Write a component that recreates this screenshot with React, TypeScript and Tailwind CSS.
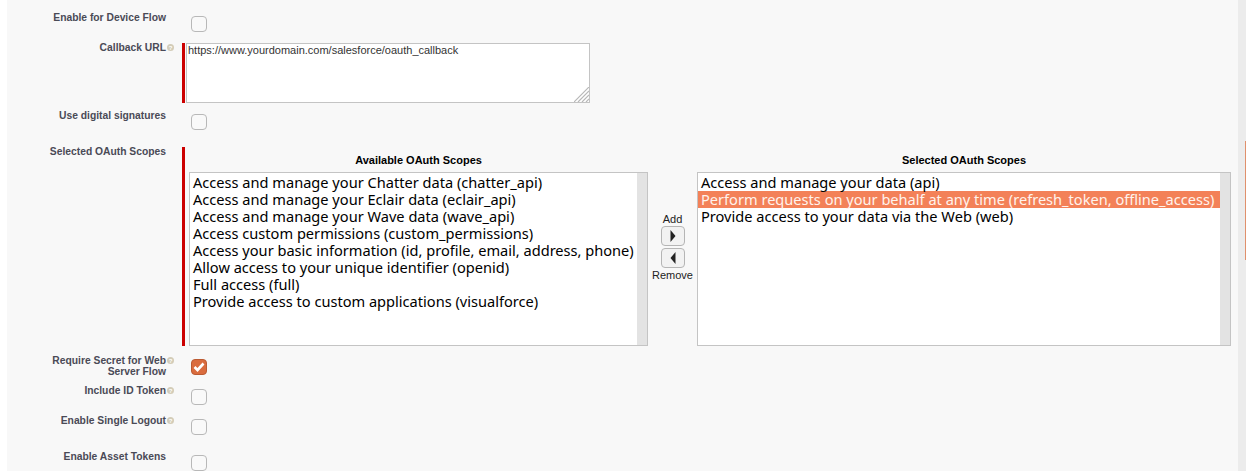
const labelFont = "font-['Liberation_Sans',Arial,sans-serif]";
const listFont = "font-['Noto_Sans',sans-serif]";

const available = [
  "Access and manage your Chatter data (chatter_api)",
  "Access and manage your Eclair data (eclair_api)",
  "Access and manage your Wave data (wave_api)",
  "Access custom permissions (custom_permissions)",
  "Access your basic information (id, profile, email, address, phone)",
  "Allow access to your unique identifier (openid)",
  "Full access (full)",
  "Provide access to custom applications (visualforce)",
];

const selected = [
  "Access and manage your data (api)",
  "Perform requests on your behalf at any time (refresh_token, offline_access)",
  "Provide access to your data via the Web (web)",
];

function HelpIcon() {
  return (
    <span className="mt-[2px] ml-[1px] flex h-[7px] w-[7px] shrink-0 items-center justify-center rounded-full bg-[#d3ccb8] text-[6px] leading-none font-bold text-white">
      ?
    </span>
  );
}

function Label({ text, help, className }: { text: React.ReactNode; help?: boolean; className?: string }) {
  return (
    <div className={`flex w-[174px] shrink-0 justify-end ${className ?? ""}`}>
      <div className="text-right text-[10.3px] leading-[11px] font-bold text-[#4a4a56]">{text}</div>
      {help ? <HelpIcon /> : <span className="w-[8px] shrink-0" />}
    </div>
  );
}

function Checkbox({ checked }: { checked?: boolean }) {
  return checked ? (
    <span className="flex h-[16px] w-[16px] items-center justify-center rounded-[4px] border border-[#bb5a32] bg-[#da6c3e]">
      <svg width="12" height="10" viewBox="0 0 12 10" fill="none">
        <path d="M1.5 5 L4.5 8 L10.5 1.5" stroke="#fff" strokeWidth="2.6" />
      </svg>
    </span>
  ) : (
    <span className="block h-[16px] w-[16px] rounded-[4px] border-[1.5px] border-[#b8b8b8] bg-[#f9f9f9]" />
  );
}

function ScopeList({ items, highlight, width }: { items: string[]; highlight?: number; width: string }) {
  return (
    <div className={`flex h-[174px] border border-[#c4c4c4] bg-white ${width}`}>
      <div className={`${listFont} min-w-0 flex-1 overflow-hidden pt-[1px] text-[14.6px] leading-[17px] text-black`}>
        {items.map((item, i) => (
          <div
            key={item}
            className={`whitespace-nowrap pl-[3px] ${i === highlight ? "bg-[#f38158] text-[#fff3ec]" : ""}`}
          >
            {item}
          </div>
        ))}
      </div>
      <div className="w-[10px] shrink-0 bg-[#e3e3e3]" />
    </div>
  );
}

function ArrowButton({ dir }: { dir: "left" | "right" }) {
  return (
    <button className="flex h-[20px] w-[24px] items-center justify-center rounded-[4px] border border-[#b5b5b5] bg-[#f2f2f2]">
      <svg width="6" height="12" viewBox="0 0 6 12">
        <path d={dir === "right" ? "M0.5 0 L5.5 6 L0.5 12 Z" : "M5.5 0 L0.5 6 L5.5 12 Z"} fill="#222" />
      </svg>
    </button>
  );
}

export default function App() {
  return (
    <div className={`${labelFont} flex h-[471px] w-[1246px] overflow-hidden bg-white`}>
      <div className="ml-[7px] w-[1231px] bg-[#f8f8f8]">
        <div className="-ml-[7px]">
          {/* Enable for Device Flow */}
          <div className="flex h-[43px]">
            <Label text="Enable for Device Flow" className="pt-[12px]" />
            <div className="ml-[17px] pt-[16px]">
              <Checkbox />
            </div>
          </div>

          {/* Callback URL */}
          <div className="flex h-[60px]">
            <Label text="Callback URL" help className="-mt-[1px]" />
            <div className="ml-[8px] w-[3px] bg-[#c00]" />
            <div className="relative ml-[1px] h-[60px] w-[404px] border border-[#c4c4c4] bg-white px-[1px] text-[11px] leading-[12px] text-[#333]">
              https://www.yourdomain.com/salesforce/oauth_callback
              <svg className="absolute right-0 bottom-0" width="15" height="15" viewBox="0 0 15 15">
                <path d="M0 15 L15 0 M4 15 L15 4 M8 15 L15 8 M12 15 L15 12" stroke="#b8b8b8" strokeWidth="1.2" />
              </svg>
            </div>
          </div>

          {/* Use digital signatures */}
          <div className="flex h-[44px]">
            <Label text="Use digital signatures" className="pt-[7px]" />
            <div className="ml-[17px] pt-[11px]">
              <Checkbox />
            </div>
          </div>

          {/* Selected OAuth Scopes */}
          <div className="flex h-[199px]">
            <Label text="Selected OAuth Scopes" className="-mt-[1px]" />
            <div className="ml-[8px] w-[3px] bg-[#c00]" />
            <div className="ml-[4px] flex">
              <div className="w-[459px]">
                <div className="flex h-[25px] items-start justify-center pt-[7px] text-[11px] leading-[12px] font-bold text-black">
                  Available OAuth Scopes
                </div>
                <ScopeList items={available} width="w-[459px]" />
              </div>
              <div className="flex w-[49px] flex-col items-center pt-[66px] text-[11px] leading-[13px] text-[#222]">
                <span>Add</span>
                <ArrowButton dir="right" />
                <div className="h-[2px]" />
                <ArrowButton dir="left" />
                <span className="mt-[1px]">Remove</span>
              </div>
              <div className="w-[534px]">
                <div className="flex h-[25px] items-start justify-center pt-[7px] text-[11px] leading-[12px] font-bold text-black">
                  Selected OAuth Scopes
                </div>
                <ScopeList items={selected} highlight={1} width="w-[534px]" />
              </div>
            </div>
          </div>

          {/* Checkbox rows */}
          <div className="flex h-[35px]">
            <Label
              text={
                <>
                  Require Secret for Web
                  <br />
                  Server Flow
                </>
              }
              help
              className="pt-[9px]"
            />
            <div className="ml-[17px] pt-[13px]">
              <Checkbox checked />
            </div>
          </div>
          <div className="flex h-[30px]">
            <Label text="Include ID Token" help className="pt-[4px]" />
            <div className="ml-[17px] pt-[8px]">
              <Checkbox />
            </div>
          </div>
          <div className="flex h-[30px]">
            <Label text="Enable Single Logout" help className="pt-[4px]" />
            <div className="ml-[17px] pt-[8px]">
              <Checkbox />
            </div>
          </div>
          <div className="flex h-[30px]">
            <Label text="Enable Asset Tokens" className="pt-[10px]" />
            <div className="ml-[17px] pt-[14px]">
              <Checkbox />
            </div>
          </div>
        </div>
      </div>

      {/* Window scrollbar */}
      <div className="ml-auto w-[8px] bg-[#ececec] pt-[141px]">
        <div className="ml-auto h-[119px] w-[1px] bg-[#e0906c]" />
      </div>
    </div>
  );
}
